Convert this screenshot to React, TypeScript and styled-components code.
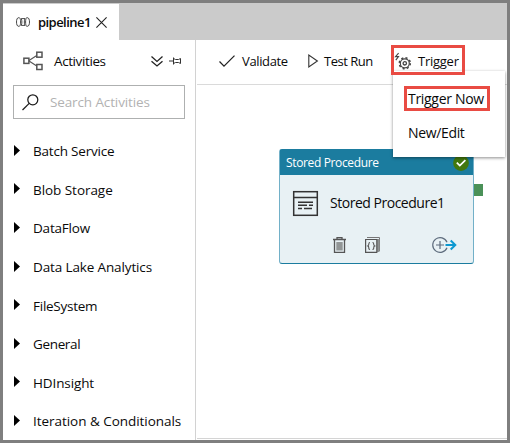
import React from 'react';
import styled, { createGlobalStyle } from 'styled-components';

const GlobalStyle = createGlobalStyle`
  * { box-sizing: border-box; }
  html, body { margin: 0; padding: 0; }
  body { font-family: "Open Sans", "Noto Sans", sans-serif; font-size: 13px; color: #000; }
  svg { display: block; flex: none; overflow: visible; }
`;

const Frame = styled.div`
  display: flex;
  flex-direction: column;
  width: 510px;
  height: 443px;
  border: 3px solid #7f7f7f;
  background: #fff;
  overflow: hidden;
`;

const TabStrip = styled.div`
  flex: none;
  height: 37px;
  background: #cbcbcb;
  padding-top: 1px;
`;

const Tab = styled.div`
  display: flex;
  align-items: center;
  width: 116px;
  height: 36px;
  padding-left: 13px;
  background: #fff;
`;

const Label = styled.span<{ $size?: number; $spacing?: number; $weight?: number; $color?: string }>`
  font-size: ${p => p.$size ?? 13.5}px;
  letter-spacing: ${p => p.$spacing ?? 0}px;
  font-weight: ${p => p.$weight ?? 400};
  color: ${p => p.$color ?? '#0a0a0a'};
  line-height: 20px;
  white-space: nowrap;
`;

const TabLabel = styled(Label)`
  width: 57px;
  margin-left: 8px;
  margin-right: 1px;
`;

const Body = styled.div`
  display: flex;
  flex: 1;
  min-height: 0;
`;

const Sidebar = styled.aside`
  width: 193px;
  flex: none;
  border-right: 1px solid #d2d2d2;
`;

const SidebarHeader = styled.div`
  display: flex;
  align-items: center;
  height: 45px;
  padding: 0 14px 3px 20px;
`;

const HeaderTitle = styled(Label)`
  flex: 1;
  margin-left: 11px;
`;

const HeaderTools = styled.div`
  display: flex;
  align-items: center;
  gap: 6px;
`;

const SearchBox = styled.div`
  display: flex;
  align-items: center;
  gap: 11px;
  width: 172px;
  height: 34px;
  margin-left: 10px;
  padding-left: 8px;
  border: 1px solid #aeb0b0;
`;

const Categories = styled.div`
  display: grid;
  grid-template-rows: repeat(8, 38.6px);
  margin-top: 13px;
`;

const Category = styled.div`
  display: flex;
  align-items: center;
  gap: 13px;
  padding-left: 11px;

  svg { margin-bottom: 2px; }
`;

const Main = styled.main`
  display: flex;
  flex-direction: column;
  flex: 1;
  padding-bottom: 1px;
`;

const Toolbar = styled.div`
  display: flex;
  align-items: center;
  height: 45px;
  flex: none;
  margin-left: 1px;
  padding: 0 0 3px 22px;
  border-bottom: 1px solid #dadada;
`;

const ToolButton = styled.div<{ $width: number; $gap: number }>`
  display: flex;
  align-items: center;
  gap: ${p => p.$gap}px;
  width: ${p => p.$width}px;
`;

const TriggerArea = styled.div`
  position: relative;
  margin-top: -1px;
`;

const TriggerButton = styled.div`
  position: relative;
  z-index: 3;
  display: flex;
  align-items: center;
  gap: 7px;
  width: 74px;
  height: 30px;
  padding: 2px 0 0 1px;
  border: 3px solid #e94b43;
`;

const Menu = styled.div`
  position: absolute;
  z-index: 2;
  left: 2px;
  top: 26px;
  width: 112px;
  height: 86px;
  padding: 15px 0 0 11px;
  background: #fff;
  box-shadow: 0 1px 3px rgba(0, 0, 0, 0.45);
`;

const MenuItem = styled.div<{ $marked?: boolean }>`
  display: flex;
  align-items: center;
  width: 86px;
  height: 25px;
  margin-bottom: 9px;
  padding-left: ${p => (p.$marked ? 1 : 4)}px;
  border: ${p => (p.$marked ? '3px solid #e94b43' : '0')};
`;

const Canvas = styled.div`
  position: relative;
  flex: 1;
  margin-left: 1px;
  border-bottom: 1px solid #d4d4d4;
`;

const ActivityNode = styled.div`
  position: absolute;
  left: 82px;
  top: 64px;
  width: 195px;
  height: 115px;
  border: 1px solid #1b7c9f;
  border-left-color: #72b0c8;
  border-right-color: #72b0c8;
  border-radius: 3px;
  background: #e8f1f4;
`;

const NodeHeader = styled.div`
  display: flex;
  align-items: center;
  height: 25px;
  padding-left: 6px;
  background: #1b7c9f;
`;

const StatusBadge = styled.div`
  position: absolute;
  right: 4px;
  top: 5px;
`;

const OutputPort = styled.div`
  position: absolute;
  left: 194px;
  top: 34px;
  width: 9px;
  height: 12px;
  background: #4a9158;
`;

const NodeContent = styled.div`
  display: flex;
  align-items: center;
  gap: 12px;
  height: 56px;
  padding-left: 13px;
`;

const NodeActions = styled.div`
  display: flex;
  align-items: center;
  height: 28px;
  padding-left: 53px;
`;

const ActionSlot = styled.div<{ $width: number }>`
  width: ${p => p.$width}px;
`;

const PipelineIcon = () => (
  <svg width="14" height="10" viewBox="0 0 14 10" fill="none" stroke="#333" strokeWidth="0.9">
    <path d="M3.4.7H2.6C1.2.7.5 2.6.5 5s.7 4.3 2.1 4.3h.8M3.3.7c1.1.7 1.3 2.5 1.3 4.3S4.4 8.6 3.3 9.3" />
    <path d="M5.2 1.6C6.1 3.5 6.1 6.5 5.2 8.4M5.2 1.6h3.8M5.2 8.4h3.8M9 1.6C8.1 3.5 8.1 6.5 9 8.4" />
    <path d="M10.6.7C9.8 1.6 9.6 3.2 9.6 5s.2 3.4 1 4.3M10.6.7h.8c1.4 0 2.1 1.9 2.1 4.3s-.7 4.3-2.1 4.3h-.8" />
  </svg>
);

const CloseIcon = () => (
  <svg width="11" height="11" viewBox="0 0 11 11" stroke="#222" strokeWidth="1.1">
    <path d="M.4.4l10.2 10.2M10.6.4L.4 10.6" />
  </svg>
);

const ActivitiesIcon = () => (
  <svg width="20" height="20" viewBox="0 0 20 20" fill="none" stroke="#555" strokeWidth="1.5">
    <rect x=".9" y="7.2" width="5" height="5.2" />
    <rect x="13.8" y="1.2" width="5.2" height="5" />
    <rect x="13.8" y="13.5" width="5.2" height="5" />
    <path d="M6 9.5l7.8-4.9M6 10.1l7.8 5" strokeWidth="1.2" />
  </svg>
);

const CollapseIcon = () => (
  <svg width="12" height="11" viewBox="0 0 12 11" fill="none" stroke="#222" strokeWidth="1.3">
    <path d="M.5.6L6 5.4 11.5.6M.5 5.2L6 10l5.5-4.8" />
  </svg>
);

const PinIcon = () => (
  <svg width="12" height="8" viewBox="0 0 12 8" fill="none" stroke="#333">
    <path d="M0 4h4M4.5.5v7M4.5 1.5L6.5 2.5h3l2-1v5l-2-1h-3l-2 1" />
  </svg>
);

const SearchIcon = () => (
  <svg width="17" height="17" viewBox="0 0 17 17" fill="none" stroke="#1b1b1b" strokeWidth="1.25">
    <circle cx="10.8" cy="5.8" r="5" />
    <path d="M7.2 9.4L.5 16" />
  </svg>
);

const ArrowIcon = () => (
  <svg width="6" height="11" viewBox="0 0 6 11">
    <path d="M0 0l6 5.5L0 11z" fill="#000" />
  </svg>
);

const CheckIcon = () => (
  <svg width="16" height="12" viewBox="0 0 16 12" fill="none" stroke="#222" strokeWidth="1.3">
    <path d="M.5 6.5l4.5 4.6L15.5.6" />
  </svg>
);

const PlayIcon = () => (
  <svg width="10" height="14" viewBox="0 0 10 14" fill="none" stroke="#333" strokeWidth="1.1">
    <path d="M.8 1v12L9.4 7z" />
  </svg>
);

const TriggerIcon = () => (
  <svg width="16" height="17" viewBox="0 0 16 17" fill="none" stroke="#444">
    <path d="M3.6.2L.5 3.6h3L.8 7.2" strokeWidth="1.1" />
    <circle cx="9.8" cy="10.3" r="4.5" strokeWidth="1.2" />
    <circle cx="9.8" cy="10.3" r="5.5" strokeWidth="1.5" strokeDasharray="2.1 2.22" />
    <circle cx="9.8" cy="10.3" r="1.7" strokeWidth="1.3" />
  </svg>
);

const ProcedureIcon = () => (
  <svg width="25" height="25" viewBox="0 0 25 25" fill="none" stroke="#333" strokeWidth="1.5">
    <rect x=".7" y=".7" width="23.6" height="23.6" />
    <path d="M1 6.5h23" />
    <path d="M5 11.2h15M5 14.3h9M16 14.3h4M5 17.5h4M11 17.5h8" />
  </svg>
);

const TrashIcon = () => (
  <svg width="13" height="16" viewBox="0 0 13 16" fill="none" stroke="#555" strokeWidth="1.3">
    <path d="M0 2.5h13M4 2V.7h5V2M1.5 3v12.3h10V3" />
    <path d="M3.3 5h6.4v8.5H3.3z" fill="#929696" stroke="none" />
  </svg>
);

const CodeIcon = () => (
  <svg width="15" height="16" viewBox="0 0 15 16" fill="none" stroke="#555">
    <path d="M2 .5h12.5V14" stroke="#777" />
    <path d="M12 2h2.5v13H12z" fill="#8e9292" stroke="none" />
    <path d="M.6 2.5h11.2v12.9H.6z" strokeWidth="1.2" />
    <path d="M5 5.5q-1.2 0-1.2 1.4T2.8 8.9q1 .3 1 2T5 12.3M7.5 5.5q1.2 0 1.2 1.4t1 2q-1 .3-1 2t-1.2 1.4" strokeWidth="1.1" />
  </svg>
);

const AddOutputIcon = () => (
  <svg width="25" height="16" viewBox="0 0 25 16" fill="none">
    <path d="M15 5.2A7.4 7.4 0 1 0 15 10.8M8 4v8M4 8h8" stroke="#5d6b7c" strokeWidth="1.2" />
    <path d="M13.5 8h9.5M18.7 3.5L23.3 8l-4.6 4.5" stroke="#0c98d0" strokeWidth="2" />
  </svg>
);

const SuccessIcon = () => (
  <svg width="16" height="16" viewBox="0 0 16 16">
    <circle cx="8" cy="8" r="7.9" fill="#42780d" />
    <path d="M3.8 7.6l3 3 5.6-5.5" fill="none" stroke="#fff" strokeWidth="1.7" />
  </svg>
);

const categories = [
  { name: 'Batch Service', spacing: -0.2 },
  { name: 'Blob Storage', spacing: -0.05 },
  { name: 'DataFlow', spacing: -0.2 },
  { name: 'Data Lake Analytics', spacing: -0.13 },
  { name: 'FileSystem', spacing: -0.25 },
  { name: 'General', spacing: -0.35 },
  { name: 'HDInsight', spacing: -0.12 },
  { name: 'Iteration & Conditionals', spacing: -0.04 },
];

export default function App() {
  return (
    <>
      <GlobalStyle />
      <Frame>
        <TabStrip>
          <Tab>
            <PipelineIcon />
            <TabLabel $weight={600} $size={13} $spacing={-0.55}>pipeline1</TabLabel>
            <CloseIcon />
          </Tab>
        </TabStrip>
        <Body>
          <Sidebar>
            <SidebarHeader>
              <ActivitiesIcon />
              <HeaderTitle $spacing={-0.4}>Activities</HeaderTitle>
              <HeaderTools>
                <CollapseIcon />
                <PinIcon />
              </HeaderTools>
            </SidebarHeader>
            <SearchBox>
              <SearchIcon />
              <Label $color="#b2b2b2" $spacing={-0.12}>Search Activities</Label>
            </SearchBox>
            <Categories>
              {categories.map(c => (
                <Category key={c.name}>
                  <ArrowIcon />
                  <Label $spacing={c.spacing}>{c.name}</Label>
                </Category>
              ))}
            </Categories>
          </Sidebar>
          <Main>
            <Toolbar>
              <ToolButton $width={89} $gap={7}>
                <CheckIcon />
                <Label $size={13} $spacing={-0.37}>Validate</Label>
              </ToolButton>
              <ToolButton $width={83} $gap={6}>
                <PlayIcon />
                <Label $size={13} $spacing={-0.5}>Test Run</Label>
              </ToolButton>
              <TriggerArea>
                <TriggerButton>
                  <TriggerIcon />
                  <Label $size={13} $spacing={-0.25}>Trigger</Label>
                </TriggerButton>
                <Menu>
                  <MenuItem $marked>
                    <Label $size={14} $spacing={-0.3}>Trigger Now</Label>
                  </MenuItem>
                  <MenuItem>
                    <Label $size={14} $spacing={-0.35}>New/Edit</Label>
                  </MenuItem>
                </Menu>
              </TriggerArea>
            </Toolbar>
            <Canvas>
              <ActivityNode>
                <NodeHeader>
                  <Label $size={12} $spacing={-0.36} $color="#fff">Stored Procedure</Label>
                </NodeHeader>
                <NodeContent>
                  <ProcedureIcon />
                  <Label $size={14} $spacing={-0.48}>Stored Procedure1</Label>
                </NodeContent>
                <NodeActions>
                  <ActionSlot $width={32}><TrashIcon /></ActionSlot>
                  <ActionSlot $width={67}><CodeIcon /></ActionSlot>
                  <AddOutputIcon />
                </NodeActions>
                <StatusBadge><SuccessIcon /></StatusBadge>
                <OutputPort />
              </ActivityNode>
            </Canvas>
          </Main>
        </Body>
      </Frame>
    </>
  );
}
